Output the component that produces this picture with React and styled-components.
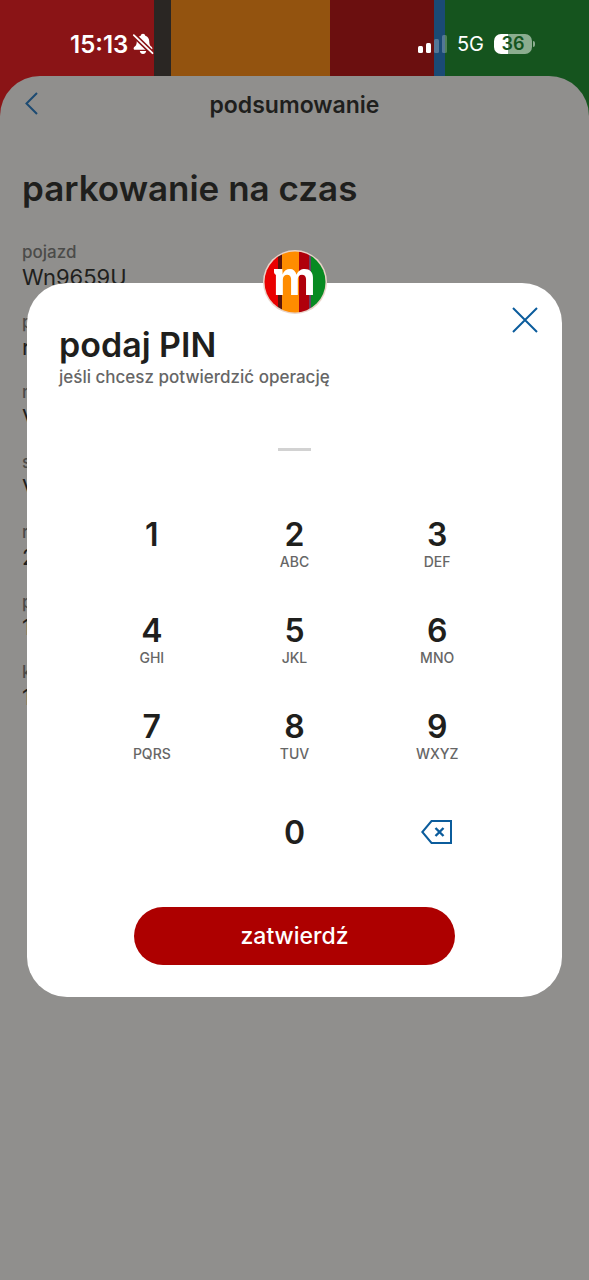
import React, { useState } from "react";
import styled, { createGlobalStyle } from "styled-components";

const fields = [
  { id: "vehicle", label: "pojazd", value: "Wn9659U" },
  { id: "payment", label: "p", value: "r" },
  { id: "city", label: "n", value: "V" },
  { id: "zone", label: "s", value: "V" },
  { id: "area", label: "r", value: "2" },
  { id: "start", label: "p", value: "1" },
  { id: "end", label: "k", value: "1" },
];

const keys = [
  { digit: "1", letters: "\u00a0" },
  { digit: "2", letters: "ABC" },
  { digit: "3", letters: "DEF" },
  { digit: "4", letters: "GHI" },
  { digit: "5", letters: "JKL" },
  { digit: "6", letters: "MNO" },
  { digit: "7", letters: "PQRS" },
  { digit: "8", letters: "TUV" },
  { digit: "9", letters: "WXYZ" },
];

function BellOffIcon() {
  return (
    <svg width="22" height="22" viewBox="0 0 22 22" fill="#fff" aria-hidden="true">
      <path d="M11 .8c-1.200 0-2.100.8-2.300 1.900C6.200 3.500 4.900 5.500 4.800 8c-.1 3-.5 4.200-1.700 5.300C2.200 14.100 1.600 14.700 1.600 15.500c0 .8.6 1.300 1.500 1.300h15.800c.9 0 1.500-.5 1.500-1.300 0-.8-.6-1.400-1.500-2.200-1.200-1.100-1.600-2.300-1.700-5.300-.1-2.500-1.400-4.500-3.900-5.300C13.100 1.600 12.200.8 11 .8z" />
      <path d="M7.800 18h6.400c-.3 1.800-1.500 3-3.200 3s-2.900-1.200-3.200-3z" />
      <path d="M1.500 1.800 20.500 20.300" stroke="#8a1416" strokeWidth="5" />
      <path d="M1.800 2.100 20.500 20.200" stroke="#fff" strokeWidth="1.800" strokeLinecap="round" />
    </svg>
  );
}

function SignalIcon() {
  return (
    <svg width="29" height="20" viewBox="0 0 29 20" fill="#fff" aria-hidden="true">
      <rect x="0" y="12" width="5" height="7" rx="1.500" />
      <rect x="8" y="9" width="5" height="10" rx="1.500" />
      <rect x="16" y="5" width="5" height="14" rx="1.500" opacity="0.25" />
      <rect x="24" y="1" width="5" height="18" rx="1.500" opacity="0.25" />
    </svg>
  );
}

function MBadge() {
  return (
    <svg width="64" height="64" viewBox="0 0 64 64" role="img" aria-label="m">
      <defs>
        <clipPath id="badge">
          <circle cx="32" cy="32" r="30.500" />
        </clipPath>
      </defs>
      <circle cx="32" cy="32" r="32" fill="#e9d3c8" />
      <g clipPath="url(#badge)">
        <rect width="15" height="64" fill="#e90000" />
        <rect x="15" width="4" height="64" fill="#5a140c" />
        <rect x="19" width="17" height="64" fill="#ff8c00" />
        <rect x="36" width="10" height="64" fill="#b0000b" />
        <rect x="46" width="2" height="64" fill="#6b3f63" />
        <rect x="48" width="16" height="64" fill="#078a22" />
      </g>
      <path d="M11 19h8v6h-5c-2 0-3-1.500-3-3z" fill="#fff" />
      <text x="10" y="45" fill="#fff" fontFamily="Inter, sans-serif" fontWeight="700" fontSize="47">
        m
      </text>
    </svg>
  );
}

function App() {
  const [pin, setPin] = useState("");

  return (
    <>
      <GlobalStyle />
      <Header>
        <StatusBar>
          <StatusGroup>
            <Time>15:13</Time>
            <BellOffIcon />
          </StatusGroup>
          <StatusGroup $gap="10px">
            <SignalIcon />
            <Network>5G</Network>
            <BatteryWrap>
              <Battery>36</Battery>
              <BatteryTip />
            </BatteryWrap>
          </StatusGroup>
        </StatusBar>
      </Header>
      <Sheet>
        <NavBar>
          <BackBtn aria-label="wstecz">
            <svg width="14" height="24" viewBox="0 0 14 24" fill="none">
              <path d="M13 1 2.500 11.500 13 22" stroke="#1c4a72" strokeWidth="2" />
            </svg>
          </BackBtn>
          <NavTitle>podsumowanie</NavTitle>
        </NavBar>
        <PageTitle>parkowanie na czas</PageTitle>
        <Fields>
          {fields.map((f) => (
            <Field key={f.id}>
              <dt>{f.label}</dt>
              <dd>{f.value}</dd>
            </Field>
          ))}
        </Fields>
      </Sheet>

      <Overlay>
        <Modal role="dialog" aria-labelledby="pin-title">
          <Badge>
            <MBadge />
          </Badge>
          <ModalHead>
            <Heading>
              <ModalTitle id="pin-title">podaj PIN</ModalTitle>
              <Subtitle>jeśli chcesz potwierdzić operację</Subtitle>
            </Heading>
            <CloseBtn aria-label="zamknij">
              <svg width="26" height="26" viewBox="0 0 26 26" fill="none">
                <path d="M1 1l24 24M25 1 1 25" stroke="#0b5c9c" strokeWidth="2" />
              </svg>
            </CloseBtn>
          </ModalHead>
          <PinInput
            type="password"
            inputMode="none"
            aria-labelledby="pin-title"
            value={pin}
            onChange={(e) => setPin(e.target.value)}
          />
          <Keypad>
            {keys.map((k) => (
              <Key key={k.digit} onClick={() => setPin(pin + k.digit)}>
                <Digit>{k.digit}</Digit>
                <Letters>{k.letters}</Letters>
              </Key>
            ))}
            <span />
            <Key onClick={() => setPin(pin + "0")}>
              <Digit>0</Digit>
            </Key>
            <Key aria-label="usuń" onClick={() => setPin(pin.slice(0, -1))}>
              <svg width="32" height="26" viewBox="0 0 32 26" fill="none" stroke="#0b5c9c" strokeWidth="2">
                <path d="M10.500 1H30v22H10.500L1.300 12z" />
                <path d="M14.500 8l8 8M22.500 8l-8 8" strokeWidth="2.400" />
              </svg>
            </Key>
          </Keypad>
          <SubmitBtn>zatwierdź</SubmitBtn>
        </Modal>
      </Overlay>
    </>
  );
}

const GlobalStyle = createGlobalStyle`
  * {
    box-sizing: border-box;
  }
  body {
    margin: 0;
    background-color: #908f8d;
    color: #1f1f1d;
    font-family: Inter, sans-serif;
  }
  button {
    padding: 0;
    border: none;
    background: none;
    color: inherit;
    font-family: inherit;
    cursor: pointer;
  }
`;

const Header = styled.header`
  padding-bottom: 40px;
  background: linear-gradient(
    to right,
    #8a1416 26.2%,
    #2a2623 26.2% 29%,
    #93530f 29% 56%,
    #6b0f0f 56% 73.700%,
    #1a4a75 73.700% 75.600%,
    #15541e 75.600%
  );
`;

const StatusBar = styled.div`
  display: flex;
  justify-content: space-between;
  align-items: center;
  padding: 28px 54px 16px 70px;
  color: #fff;
`;

const StatusGroup = styled.div`
  display: flex;
  align-items: center;
  gap: ${(props) => props.$gap || "4px"};
  height: 32px;
`;

const Time = styled.span`
  font-size: 24px;
  font-weight: 600;
`;

const Network = styled.span`
  font-size: 20px;
`;

const BatteryWrap = styled.div`
  display: flex;
  align-items: center;
  gap: 1px;
`;

const Battery = styled.div`
  width: 38px;
  border-radius: 7px;
  background: linear-gradient(to right, #fff 37%, #8bad8f 37%);
  color: #15541e;
  font-size: 18px;
  font-weight: 600;
  line-height: 20px;
  text-align: center;
`;

const BatteryTip = styled.div`
  width: 2px;
  height: 6px;
  border-radius: 0 2px 2px 0;
  background-color: #8bad8f;
`;

const Sheet = styled.main`
  margin-top: -40px;
  padding: 16px 22px;
  border-radius: 40px 40px 0 0;
  background-color: #908f8d;
`;

const NavBar = styled.div`
  display: grid;
  grid-template-columns: 16px 1fr 16px;
  align-items: start;
  height: 26px;
`;

const BackBtn = styled.button`
  display: flex;
  justify-content: flex-end;
`;

const NavTitle = styled.div`
  font-size: 23px;
  font-weight: 600;
  line-height: 26px;
  text-align: center;
`;

const PageTitle = styled.h1`
  margin: 50px 0 0;
  font-size: 35px;
  font-weight: 600;
  line-height: 40px;
`;

const Fields = styled.dl`
  margin: 32px 0 0;
`;

const Field = styled.div`
  height: 70px;

  dt {
    color: #4b4b49;
    font-size: 17px;
    font-weight: 500;
    line-height: 24px;
  }
  dd {
    margin: 0;
    font-size: 22px;
    line-height: 26px;
  }
`;

const Overlay = styled.div`
  position: fixed;
  inset: 0;
  display: flex;
  align-items: center;
  justify-content: center;
  padding: 27px;
`;

const Modal = styled.section`
  position: relative;
  display: flex;
  flex-direction: column;
  align-items: center;
  width: 100%;
  max-width: 560px;
  padding-bottom: 32px;
  border-radius: 40px;
  background-color: #fff;
`;

const Badge = styled.div`
  position: absolute;
  top: -33px;
  left: 50%;
  display: flex;
  margin-left: -32px;
`;

const ModalHead = styled.div`
  display: flex;
  align-items: flex-start;
  justify-content: space-between;
  align-self: stretch;
  padding: 24px 24px 0 32px;
`;

const Heading = styled.div`
  padding-top: 18px;
`;

const ModalTitle = styled.h2`
  margin: 0;
  font-size: 34px;
  font-weight: 600;
  line-height: 40px;
`;

const Subtitle = styled.p`
  margin: 0;
  color: #666;
  font-size: 17px;
  font-weight: 500;
  line-height: 24px;
`;

const CloseBtn = styled.button`
  display: flex;
`;

const PinInput = styled.input`
  width: 33px;
  height: 30px;
  margin: 32px 0 46px;
  padding: 0;
  border: none;
  border-bottom: 3px solid #d2d2d2;
  outline: none;
  background: none;
  text-align: center;
`;

const Keypad = styled.div`
  display: grid;
  grid-template-columns: repeat(3, 1fr);
  grid-auto-rows: 96px;
  width: 80%;
`;

const Key = styled.button`
  display: flex;
  flex-direction: column;
  align-items: center;
  justify-content: center;
`;

const Digit = styled.span`
  font-size: 32px;
  font-weight: 600;
  line-height: 34px;
`;

const Letters = styled.span`
  color: #666;
  font-size: 14px;
  font-weight: 500;
  line-height: 20px;
`;

const SubmitBtn = styled.button`
  width: 60%;
  height: 58px;
  margin-top: 26px;
  border-radius: 29px;
  background-color: #ad0000;
  color: #fff;
  font-size: 23px;
  font-weight: 500;
`;

export default App;
